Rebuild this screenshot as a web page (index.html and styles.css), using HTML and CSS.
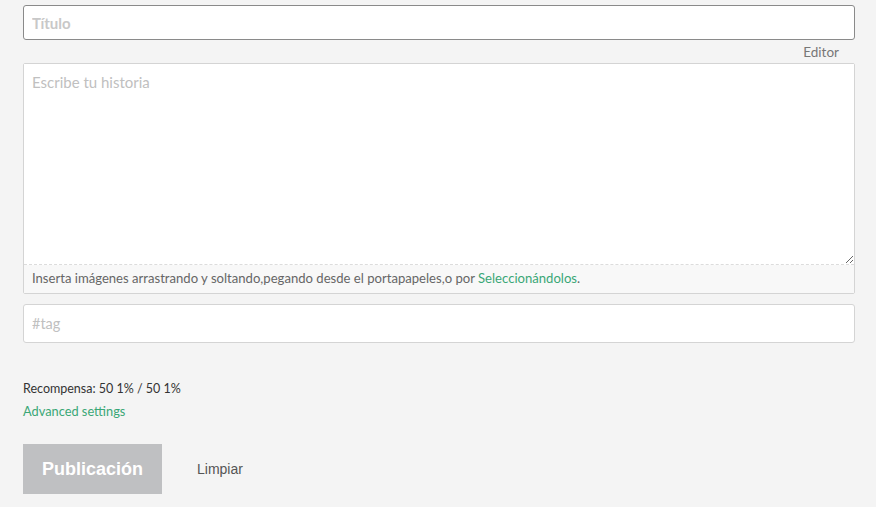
FILE: index.html
```html
<!DOCTYPE html>
<html lang="es">
<head>
<meta charset="utf-8">
<link rel="stylesheet" href="styles.css">
</head>
<body>
<div class="form">
  <input class="title-input" type="text" placeholder="Título">
  <div class="editor-label"><span>Editor</span></div>
  <div class="editor">
    <textarea class="story" placeholder="Escribe tu historia"></textarea>
    <div class="editor-footer">Inserta imágenes arrastrando y soltando,pegando desde el portapapeles,o por <a class="link">Seleccionándolos</a>.</div>
  </div>
  <input class="tag-input" type="text" placeholder="#tag">
  <div class="reward">Recompensa: 50 1% / 50 1%</div>
  <a class="link advanced">Advanced settings</a>
  <div class="actions">
    <button class="publish" disabled>Publicación</button>
    <button class="clear">Limpiar</button>
  </div>
</div>
</body>
</html>
```

FILE: styles.css
```css
html, body { margin: 0; padding: 0; }
body {
  background: #f4f4f4;
  font-family: Lato, "Open Sans", sans-serif;
  color: #333;
}
.form {
  padding: 5px 21px 0 23px;
  display: flex;
  flex-direction: column;
}
.title-input {
  box-sizing: border-box;
  height: 35px;
  width: 100%;
  border: 1px solid #8a8a8a;
  border-radius: 3px;
  background: #fff;
  padding: 0 8px;
  font-family: inherit;
  font-size: 15px;
  font-weight: 700;
  outline: none;
}
.title-input::placeholder { color: #c8c8c8; }
.editor-label {
  display: flex;
  justify-content: flex-end;
  padding: 4px 16px 0 0;
  height: 19px;
  font-size: 13.5px;
  color: #777;
}
.editor {
  border: 1px solid #d4d4d4;
  border-radius: 2px;
  background: #fff;
  display: flex;
  flex-direction: column;
}
.story {
  box-sizing: border-box;
  height: 201px;
  border: none;
  border-bottom: 1px dashed #dcdcdc;
  padding: 9px 8px;
  font-family: inherit;
  font-size: 15px;
  outline: none;
  resize: vertical;
  display: block;
}
.story::placeholder { color: #c0c0c0; }
.editor-footer {
  background: #f8f8f8;
  height: 28px;
  line-height: 27px;
  padding: 0 8px;
  font-size: 13.1px;
  color: #666;
}
.link { color: #3aa776; text-decoration: none; }
.tag-input {
  box-sizing: border-box;
  margin-top: 10px;
  height: 39px;
  width: 100%;
  border: 1px solid #d4d4d4;
  border-radius: 3px;
  background: #fff;
  padding: 0 8px;
  font-family: inherit;
  font-size: 14.5px;
  outline: none;
}
.tag-input::placeholder { color: #c0c0c0; }
.reward {
  margin-top: 38px;
  font-size: 12.5px;
  color: #333;
  line-height: 16px;
}
.advanced {
  margin-top: 6px;
  font-size: 12.8px;
  line-height: 16px;
  align-self: flex-start;
}
.actions {
  margin-top: 25px;
  display: flex;
  align-items: center;
}
.publish {
  width: 139px;
  height: 50px;
  border: none;
  background: #bfc0c2;
  color: #fff;
  font-family: "Liberation Sans", Arial, sans-serif;
  font-weight: 700;
  font-size: 18px;
}
.clear {
  margin-left: 23px;
  border: none;
  background: none;
  padding: 0 12px;
  font-family: "Liberation Sans", Arial, sans-serif;
  font-size: 14px;
  color: #555;
}
```
